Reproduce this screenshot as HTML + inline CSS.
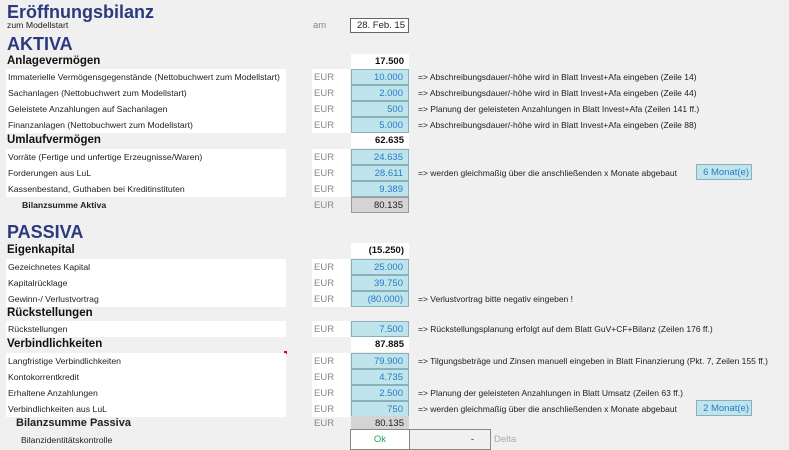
<!DOCTYPE html>
<html><head><meta charset="utf-8"><style>
body{margin:0;width:789px;height:450px;background:#f0f0f0;font-family:"Liberation Sans",Arial,sans-serif;position:relative;overflow:hidden;color:#222;line-height:1}
div{position:absolute;white-space:nowrap}
.t{color:#2b3a7e;font-weight:bold;font-size:18px;line-height:20px}
.h{font-weight:bold;font-size:11.5px;left:7px;color:#111;line-height:15px;height:15px}
.l{left:6px;width:280px;height:16px;background:#fff;font-size:8.7px;line-height:16px;padding-left:2px;box-sizing:border-box}
.e{left:312px;width:38px;height:16px;background:#fff;font-size:9.5px;line-height:18px;color:#888;padding-left:2px;box-sizing:border-box;overflow:hidden}
.v{left:351px;width:58px;height:16px;background:#bfe4ec;border:1px solid #8bb0bb;font-size:9.5px;line-height:16px;color:#2a7bc4;text-align:right;padding-right:5px;box-sizing:border-box;overflow:hidden}
.w{left:351px;width:58px;height:15px;background:#fff;font-size:9.5px;line-height:16px;font-weight:bold;text-align:right;padding-right:5px;box-sizing:border-box;color:#111;overflow:hidden}
.g{left:351px;width:58px;height:16px;background:#d4d4d4;border:1px solid #999;font-size:9.5px;line-height:16px;text-align:right;padding-right:5px;box-sizing:border-box;overflow:hidden}
.n{left:418px;font-size:8.5px;line-height:16px}
.m{left:696px;width:56px;height:16px;background:#bfe4ec;border:1px solid #8bb0bb;box-sizing:border-box;font-size:9.5px;line-height:16px;color:#2a7bc4;text-align:right;padding-right:2px;overflow:hidden}
</style></head><body>
<div class="t" style="left:7px;top:2px">Eröffnungsbilanz</div>
<div style="left:7px;top:20px;font-size:8.7px;line-height:11px">zum Modellstart</div>
<div style="left:313px;top:20px;font-size:9.5px;line-height:11px;color:#888">am</div>
<div style="left:350px;top:18px;width:59px;height:15px;border:1px solid #666;box-sizing:border-box;background:#fff;font-size:9.5px;line-height:14px;text-align:right;padding-right:3px;overflow:hidden">28. Feb. 15</div>
<div class="t" style="left:7px;top:34px">AKTIVA</div>

<div class="h" style="top:54px">Anlagevermögen</div><div class="w" style="top:54px">17.500</div>
<div class="l" style="top:69px">Immaterielle Vermögensgegenstände (Nettobuchwert zum Modellstart)</div><div class="e" style="top:69px">EUR</div><div class="v" style="top:69px">10.000</div><div class="n" style="top:69px">=&gt; Abschreibungsdauer/-höhe wird in Blatt Invest+Afa eingeben (Zeile 14)</div>
<div class="l" style="top:85px">Sachanlagen (Nettobuchwert zum Modellstart)</div><div class="e" style="top:85px">EUR</div><div class="v" style="top:85px">2.000</div><div class="n" style="top:85px">=&gt; Abschreibungsdauer/-höhe wird in Blatt Invest+Afa eingeben (Zeile 44)</div>
<div class="l" style="top:101px">Geleistete Anzahlungen auf Sachanlagen</div><div class="e" style="top:101px">EUR</div><div class="v" style="top:101px">500</div><div class="n" style="top:101px">=&gt; Planung der geleisteten Anzahlungen in Blatt Invest+Afa (Zeilen 141 ff.)</div>
<div class="l" style="top:117px">Finanzanlagen (Nettobuchwert zum Modellstart)</div><div class="e" style="top:117px">EUR</div><div class="v" style="top:117px">5.000</div><div class="n" style="top:117px">=&gt; Abschreibungsdauer/-höhe wird in Blatt Invest+Afa eingeben (Zeile 88)</div>
<div class="h" style="top:133px">Umlaufvermögen</div><div class="w" style="top:133px">62.635</div>
<div class="l" style="top:149px">Vorräte (Fertige und unfertige Erzeugnisse/Waren)</div><div class="e" style="top:149px">EUR</div><div class="v" style="top:149px">24.635</div>
<div class="l" style="top:165px">Forderungen aus LuL</div><div class="e" style="top:165px">EUR</div><div class="v" style="top:165px">28.611</div><div class="n" style="top:165px">=&gt; werden gleichmaßig über die anschließenden x Monate abgebaut</div>
<div class="m" style="top:164px">6 Monat(e)</div>
<div class="l" style="top:181px">Kassenbestand, Guthaben bei Kreditinstituten</div><div class="e" style="top:181px">EUR</div><div class="v" style="top:181px">9.389</div>
<div style="left:22px;top:197px;font-size:8.7px;font-weight:bold;line-height:16px">Bilanzsumme Aktiva</div><div class="e" style="top:197px;background:none">EUR</div><div class="g" style="top:197px;color:#222">80.135</div>

<div class="t" style="left:7px;top:222px">PASSIVA</div>
<div class="h" style="top:243px">Eigenkapital</div><div class="w" style="top:243px">(15.250)</div>
<div class="l" style="top:259px">Gezeichnetes Kapital</div><div class="e" style="top:259px">EUR</div><div class="v" style="top:259px">25.000</div>
<div class="l" style="top:275px">Kapitalrücklage</div><div class="e" style="top:275px">EUR</div><div class="v" style="top:275px">39.750</div>
<div class="l" style="top:291px">Gewinn-/ Verlustvortrag</div><div class="e" style="top:291px">EUR</div><div class="v" style="top:291px">(80.000)</div><div class="n" style="top:291px">=&gt; Verlustvortrag bitte negativ eingeben !</div>
<div class="h" style="top:306px">Rückstellungen</div>
<div class="l" style="top:321px">Rückstellungen</div><div class="e" style="top:321px">EUR</div><div class="v" style="top:321px">7.500</div><div class="n" style="top:321px">=&gt; Rückstellungsplanung erfolgt auf dem Blatt GuV+CF+Bilanz (Zeilen 176 ff.)</div>
<div class="h" style="top:337px">Verbindlichkeiten</div><div class="w" style="top:337px">87.885</div>
<div style="left:284px;top:351px;width:3px;height:3px;background:#e00"></div>
<div class="l" style="top:353px">Langfristige Verbindlichkeiten</div><div class="e" style="top:353px">EUR</div><div class="v" style="top:353px">79.900</div><div class="n" style="top:353px">=&gt; Tilgungsbeträge und Zinsen manuell eingeben in Blatt Finanzierung (Pkt. 7, Zeilen 155 ff.)</div>
<div class="l" style="top:369px">Kontokorrentkredit</div><div class="e" style="top:369px">EUR</div><div class="v" style="top:369px">4.735</div>
<div class="l" style="top:385px">Erhaltene Anzahlungen</div><div class="e" style="top:385px">EUR</div><div class="v" style="top:385px">2.500</div><div class="n" style="top:385px">=&gt; Planung der geleisteten Anzahlungen in Blatt Umsatz (Zeilen 63 ff.)</div>
<div class="l" style="top:401px">Verbindlichkeiten aus LuL</div><div class="e" style="top:401px">EUR</div><div class="v" style="top:401px">750</div><div class="n" style="top:401px">=&gt; werden gleichmaßig über die anschließenden x Monate abgebaut</div>
<div class="m" style="top:400px">2 Monat(e)</div>
<div style="left:16px;top:416px;font-size:11px;font-weight:bold;line-height:15px">Bilanzsumme Passiva</div><div class="e" style="top:416px;background:none;line-height:16px">EUR</div><div style="left:351px;top:416px;width:58px;height:15px;background:#d4d4d4;font-size:9.5px;line-height:16px;text-align:right;padding-right:5px;box-sizing:border-box;overflow:hidden">80.135</div>
<div style="left:21px;top:432px;font-size:8.7px;line-height:16px">Bilanzidentitätskontrolle</div>
<div style="left:350px;top:429px;width:60px;height:21px;background:#fff;border:1px solid #888;box-sizing:border-box;font-size:9.5px;line-height:19px;color:#1aa85a;text-align:center">Ok</div>
<div style="left:409px;top:429px;width:82px;height:21px;border:1px solid #888;box-sizing:border-box;font-size:9.5px;line-height:19px;text-align:right;padding-right:16px">-</div>
<div style="left:494px;top:434px;font-size:9.5px;line-height:11px;color:#aaa">Delta</div>
</body></html>
